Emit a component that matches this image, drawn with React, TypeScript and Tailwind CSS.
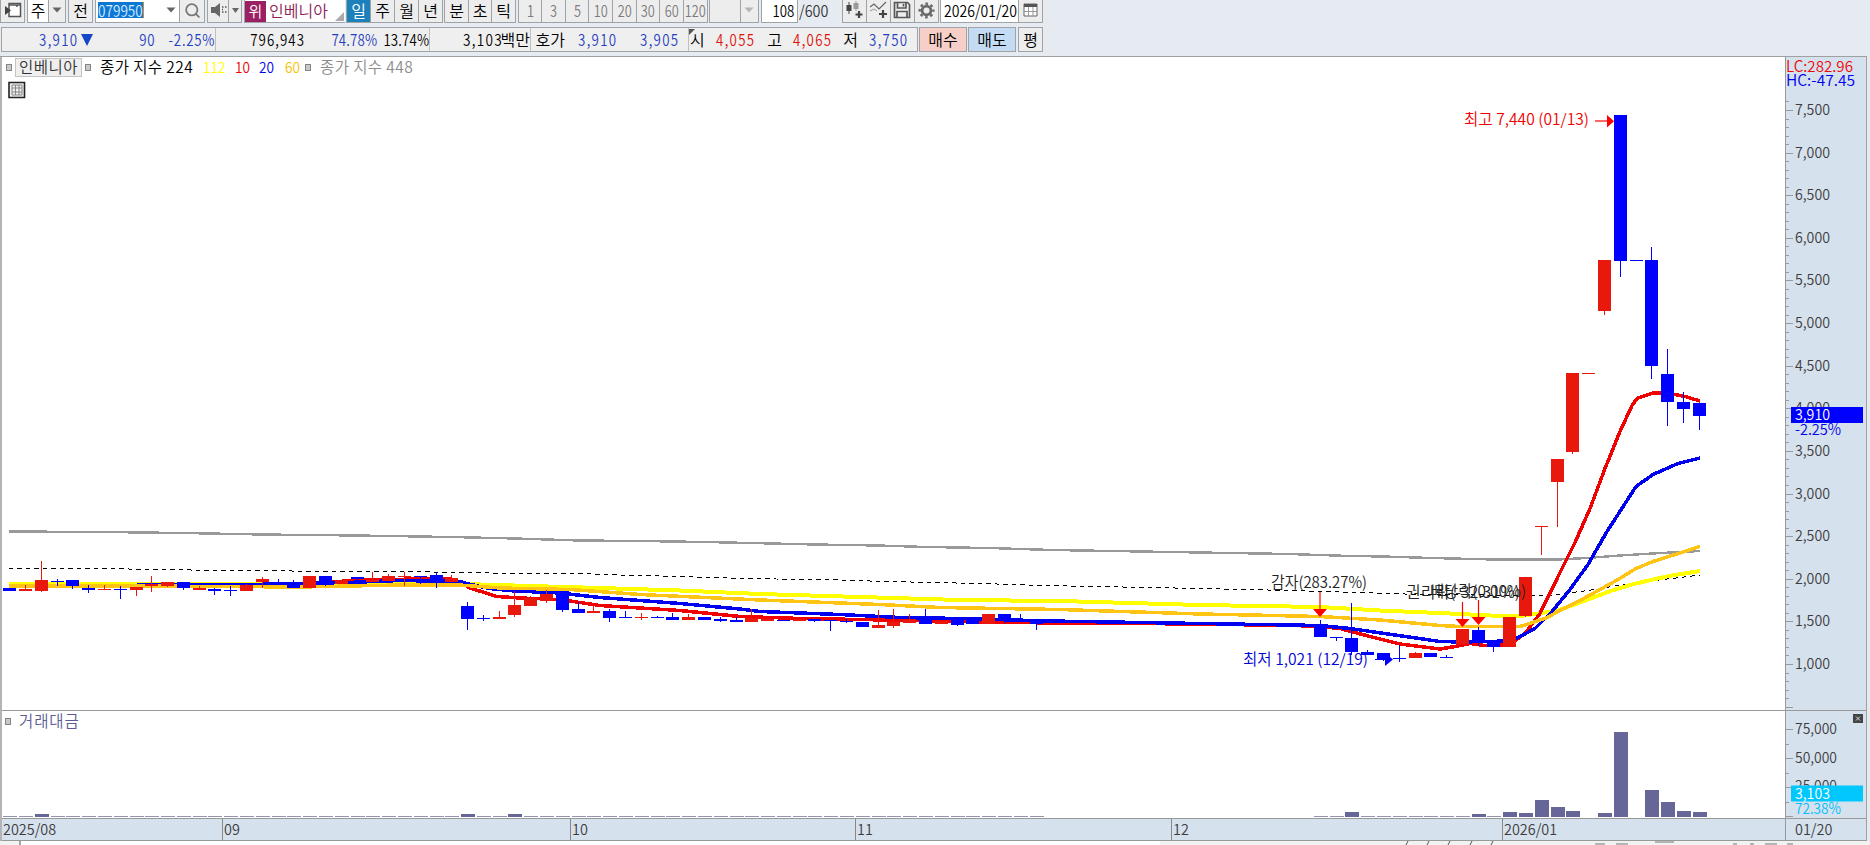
import type { ReactNode } from "react";
import { Search } from "lucide-react";

type Tone = "u" | "d";
// [slot, body top, body bottom, wick top, wick bottom, tone]
type Candle = [number, number, number, number, number, Tone];

const RED = "#e8190c";
const BLUE = "#0000ff";
const FONT = "'Noto Sans CJK KR',sans-serif";

const slotX = (i: number) => Math.round(9.2 + i * 15.79);

const candles: Candle[] = [
  [0, 588, 591.5, 588, 591.5, "d"],
  [1, 589.5, 591, 585, 591, "u"],
  [2, 580.5, 591.5, 561.5, 592.5, "u"],
  [3, 581, 582, 579, 586, "d"],
  [4, 580.5, 586.5, 580.5, 589, "d"],
  [5, 588, 590, 585, 593.5, "d"],
  [6, 589, 590, 585, 590, "u"],
  [7, 589, 590, 586.5, 599, "d"],
  [8, 587, 590, 587, 596.5, "u"],
  [9, 584.5, 586.5, 576.5, 592.5, "u"],
  [10, 582, 586, 582, 587, "u"],
  [11, 582, 588.5, 582, 590, "d"],
  [12, 588.5, 590, 586, 590, "u"],
  [13, 589, 591, 588, 595.5, "d"],
  [14, 590, 591, 586.5, 596.5, "d"],
  [15, 585.5, 591.5, 584.5, 591.5, "u"],
  [16, 579.5, 582.5, 577.5, 588, "u"],
  [17, 582, 584.5, 579.5, 584.5, "d"],
  [18, 585, 588, 580.5, 588, "d"],
  [19, 576.5, 588.5, 576.5, 588.5, "u"],
  [20, 576.5, 584.5, 576.5, 586, "d"],
  [21, 580.5, 584.5, 580.5, 584.5, "u"],
  [22, 577, 579, 577, 582.5, "d"],
  [23, 580.5, 582, 572.5, 582, "u"],
  [24, 576, 581, 574, 581, "u"],
  [25, 576, 577, 572.5, 586, "u"],
  [26, 576, 577, 576, 584.5, "d"],
  [27, 575.5, 582, 572.5, 588, "d"],
  [28, 578.5, 582, 575.5, 582, "u"],
  [29, 606.5, 619, 602.5, 630.5, "d"],
  [30, 618, 619, 615, 621, "d"],
  [31, 617, 619, 611.5, 619, "u"],
  [32, 605.5, 615.5, 591.5, 617, "u"],
  [33, 598, 606.5, 596, 606.5, "u"],
  [34, 594, 601, 590.5, 603, "u"],
  [35, 591.5, 610, 591.5, 612.5, "d"],
  [36, 609.5, 613.5, 602.5, 613.5, "d"],
  [37, 611.5, 613.5, 606.5, 613.5, "u"],
  [38, 611.5, 618, 609, 622.5, "d"],
  [39, 617, 618.5, 611, 618.5, "d"],
  [40, 617, 618.5, 613.5, 620.5, "u"],
  [41, 617, 618.5, 616, 618.5, "d"],
  [42, 617, 620, 613, 620, "d"],
  [43, 617, 620, 614, 620, "u"],
  [44, 617, 620, 617, 620, "d"],
  [45, 619.5, 621, 617.5, 622.5, "d"],
  [46, 620.5, 622.5, 617, 622.5, "d"],
  [47, 618, 622.5, 609, 622.5, "u"],
  [48, 619.5, 621, 619.5, 621, "u"],
  [49, 620, 621.5, 620, 621.5, "d"],
  [50, 619.5, 621, 619.5, 621, "u"],
  [51, 619.5, 621, 619.5, 622.5, "d"],
  [52, 620, 621, 620, 631.5, "d"],
  [53, 621.5, 622.5, 619.5, 623.5, "d"],
  [54, 622, 627.5, 622, 627.5, "d"],
  [55, 625.5, 628.5, 610.5, 628.5, "u"],
  [56, 622, 626.5, 609.5, 628, "u"],
  [57, 620.5, 623.5, 614, 623.5, "u"],
  [58, 618.5, 624.5, 609, 624.5, "d"],
  [59, 621.5, 624, 621.5, 624, "u"],
  [60, 619, 625.5, 619, 626.5, "d"],
  [61, 620, 624.5, 620, 624.5, "d"],
  [62, 614.5, 624.5, 614.5, 624.5, "u"],
  [63, 614.5, 621, 614.5, 623.5, "d"],
  [64, 620, 622.5, 614, 622.5, "d"],
  [65, 621, 624.5, 621, 630, "d"],
  [83, 625, 637.5, 620, 637.5, "d"],
  [84, 637, 638, 637, 641, "d"],
  [85, 638.5, 652.5, 603.5, 655, "d"],
  [86, 652.5, 655.5, 650, 655.5, "d"],
  [87, 653.5, 659.5, 653.5, 661, "d"],
  [88, 658, 659, 645, 662.5, "d"],
  [89, 653, 658.5, 652, 658.5, "u"],
  [90, 653.5, 657.5, 653.5, 657.5, "d"],
  [91, 657, 658, 655, 658, "d"],
  [92, 629.5, 644.5, 629.5, 644.5, "u"],
  [93, 630.5, 643.5, 627, 646.5, "d"],
  [94, 640, 647.5, 640, 652.5, "d"],
  [95, 617, 647.5, 617, 647.5, "u"],
  [96, 577, 616.5, 577, 617.5, "u"],
  [97, 526, 527, 526, 555, "u"],
  [98, 459.5, 482.5, 459.5, 527.5, "u"],
  [99, 373.5, 452.5, 373.5, 454.5, "u"],
  [100, 373, 374, 373, 374, "u"],
  [101, 260.5, 311.5, 260.5, 315, "u"],
  [102, 115.5, 261.5, 115.5, 277.5, "d"],
  [103, 260, 261, 260, 261, "d"],
  [104, 260.5, 366.5, 247, 379, "d"],
  [105, 374.5, 402.5, 349.5, 426.5, "d"],
  [106, 402, 409, 392, 423.5, "d"],
  [107, 403, 416.5, 403, 430.5, "d"],
];

const averages = [
  {
    color: "#999999",
    width: 2.4,
    points:
      "9,532 103,532.5 183,533.5 262,535 357,536 451,537.5 515,539 579,541 640,541.5 705,542.5 751,543.5 815,545 878,546 926,547.5 989,548.5 1052,550.5 1200,553 1289,554.5 1350,556.5 1384,557 1431,558.5 1494,560 1558,560 1587,558.5 1620,556 1652,554 1700,551.5",
  },
  {
    color: "#000000",
    width: 1,
    dash: "4.5 4",
    points:
      "9,568.5 97,569 222,571 430,572.5 490,573.5 570,573.5 617,575.5 681,577 728,578.5 776,579.5 838,580.5 886,582 934,583 997,584.5 1045,586 1200,589 1290,591 1340,592.5 1376,593.5 1420,595 1550,596 1595,590 1612,587 1634,583.5 1680,578 1700,575.5",
  },
  {
    color: "#ffff00",
    width: 4,
    points:
      "9,584 465,584.5 530,586.5 600,588.5 680,591 760,594.5 860,597.5 960,600.5 1060,601.5 1200,605.5 1260,606.5 1320,607.5 1380,611 1450,614 1490,616 1520,616.5 1545,613 1558,611 1580,603 1612,591 1632,585 1653,580 1672,576 1700,571.5",
  },
  {
    color: "#f00000",
    width: 3.5,
    points:
      "9,586 250,587 330,583 360,580 450,579.5 462,584 470,588.5 497,597 520,598.5 560,600 600,606 680,611 740,617 800,619 860,620 960,622 1050,623.5 1200,624.5 1315,626.5 1340,629 1370,637 1400,644.5 1440,649.5 1455,647 1470,644 1485,646 1510,645 1525,634 1540,614 1560,573 1575,543 1590,509 1605,469 1620,432 1632,406 1637,399 1653,393.5 1670,394 1685,397 1700,401.5",
  },
  {
    color: "#0000f0",
    width: 3.5,
    points:
      "9,586 100,586 250,585 347,583 400,581 460,582 466,584 490,589 515,591.5 560,593.5 600,598 680,604 740,609.5 760,612 840,615 900,618 960,619 1050,621.5 1200,624 1320,626 1350,629 1440,642 1460,642.5 1510,641.5 1520,637 1535,629 1552,612 1570,590 1588,565 1607,532 1636,487 1653,475 1678,464 1700,458.5",
  },
  {
    color: "#ffc414",
    width: 3.5,
    points:
      "9,586.5 150,586.5 300,587.5 400,585.5 460,585.5 500,588.5 570,590 640,595 760,600.5 880,605 940,608 1060,610 1200,614.5 1250,615.5 1320,617 1380,620.5 1440,626 1460,627 1520,627 1533,623 1547,618 1560,611 1580,601 1600,590 1618,580 1636,569 1653,562 1672,556 1700,547",
  },
];

const volumeTops: Record<number, number> = {
  2: 814, 29: 814, 32: 814, 85: 812, 93: 814, 95: 812, 96: 813, 97: 800,
  98: 807, 99: 810.5, 101: 813, 102: 732, 104: 789.5, 105: 801.5, 106: 810.5,
  107: 812,
};

const months = [
  { label: "2025/08", w: "w-[220px]" },
  { label: "09", w: "w-[348px]" },
  { label: "10", w: "w-[285px]" },
  { label: "11", w: "w-[316px]" },
  { label: "12", w: "w-[331px]" },
  { label: "2026/01", w: "w-[283px]" },
];

const Label = ({
  x, y, len, fill = "#3c3c3c", size = 15.5, children,
}: { x: number; y: number; len: number; fill?: string; size?: number; children: string }) => (
  <text x={x} y={y - 0.5} fontSize={size} fill={fill} textLength={len} lengthAdjust="spacingAndGlyphs">
    {children}
  </text>
);

const Btn = ({ className = "", children }: { className?: string; children?: ReactNode }) => (
  <div
    className={`flex h-full shrink-0 items-center justify-center border-r border-b border-[#a0a3a6] bg-[#ededed] pb-[2px] ${className}`}
  >
    {children}
  </div>
);

const Caret = ({ color = "#666666" }: { color?: string }) => (
  <svg width="10" height="6" viewBox="0 0 10 6">
    <path d="M0.5 0.5h9L5 5.5z" fill={color} />
  </svg>
);

const Toolbar = () => (
  <div className="flex h-[23px] text-[16px] leading-none text-black">
    <Btn className="w-[25px] border-l">
      <svg width="18" height="18" viewBox="0 0 18 18">
        <path d="M5 2.5h11.500v13H5z" fill="#fff" stroke="#555" strokeWidth="1.500" />
        <path d="M5 4h11.500M13 4v2" stroke="#555" strokeWidth="1.500" />
        <path d="M1 5v9l6-4.500z" fill="#444" />
      </svg>
    </Btn>
    <Btn className="ml-[2px] w-[22px] border-l bg-white!">주</Btn>
    <Btn className="w-[17px]"><Caret /></Btn>
    <Btn className="ml-[2px] w-[25px] border-l">전</Btn>
    <div className="ml-[2px] flex h-full w-[67px] items-center border-b border-l border-[#a0a3a6] bg-white pb-[2px] pl-[2px]">
      <span className="flex h-[16px] w-[54px] shrink-0 origin-left scale-x-85 items-center border-r border-orange-400 bg-[#0c78d4] text-[#d8ecff]">
        079950
      </span>
    </div>
    <Btn className="w-[18px] bg-white!"><Caret /></Btn>
    <Btn className="w-[25px]"><Search size={17} color="#777777" strokeWidth={2.500} /></Btn>
    <Btn className="ml-[2px] w-[22px] border-l">
      <svg width="17" height="16" viewBox="0 0 17 16">
        <path d="M1 5h4l5-4v14l-5-4H1z" fill="#666" />
        <path d="M12 5h1.500M12 10h1.500M15 5h1.500M15 10h1.500M12 7.500h1" stroke="#555" strokeWidth="1.500" />
      </svg>
    </Btn>
    <Btn className="w-[13px]">
      <svg width="7" height="5" viewBox="0 0 7 5"><path d="M0 0h7L3.500 5z" fill="#666" /></svg>
    </Btn>
    <div className="ml-[2px] flex h-full w-[101px] items-center border-b border-l border-[#a0a3a6] bg-white">
      <span className="flex h-[21px] w-[21px] shrink-0 items-center justify-center bg-[#9b2063] pb-[2px] text-[15px] text-white">위</span>
      <span className="ml-[3px] shrink-0 pb-[2px] text-[#8c1f5c]">인베니아</span>
      <svg className="ml-auto self-end" width="11" height="11" viewBox="0 0 11 11"><path d="M10 1v9H1z" fill="#aaa" /></svg>
    </div>
    <Btn className="ml-[1px] w-[25px] border-l bg-[#1c80bb]! text-white">일</Btn>
    <Btn className="w-[24px]">주</Btn>
    <Btn className="w-[24px]">월</Btn>
    <Btn className="w-[24px]">년</Btn>
    <Btn className="ml-[1px] w-[25px] border-l">분</Btn>
    <Btn className="w-[23px]">초</Btn>
    <Btn className="w-[24px]">틱</Btn>
    <div className="ml-[2px] flex text-[#7c7c7c]">
      <Btn className="w-[24px] border-l"><span className="scale-x-85">1</span></Btn>
      {["3", "5", "10", "20", "30", "60", "120"].map((n) => (
        <Btn key={n} className="w-[23.7px]"><span className="scale-x-80">{n}</span></Btn>
      ))}
    </div>
    <Btn className="ml-[1px] w-[32px] border-l" />
    <Btn className="w-[18px]"><Caret color="#b5b5b5" /></Btn>
    <div className="ml-[2px] flex h-full w-[37px] items-center justify-end border-r border-b border-l border-[#a0a3a6] bg-white pr-[2px] pb-[2px]">
      <span className="origin-right scale-x-83">108</span>
    </div>
    <div className="flex w-[44px] items-center pb-[3px] pl-[1px] text-[#333]">
      <span className="origin-left scale-x-90">/600</span>
    </div>
    <Btn className="w-[25px] border-l">
      <svg width="19" height="18" viewBox="0 0 19 18">
        <path d="M4 1v12" stroke="#444" />
        <path d="M1.500 4h5v6h-5z" fill="#444" />
        <path d="M11 0v10" stroke="#999" />
        <path d="M8.500 2h5v6h-5z" fill="#999" />
        <path d="M14 10v7M10.500 13.500h7" stroke="#444" strokeWidth="2.200" />
      </svg>
    </Btn>
    <Btn className="w-[24px]">
      <svg width="19" height="18" viewBox="0 0 19 18">
        <path d="M1 6l4-3 5 5 7-7" fill="none" stroke="#666" strokeWidth="1.200" />
        <path d="M1 10l4-2 3 2" fill="none" stroke="#999" />
        <path d="M14 9v8M10 13h8" stroke="#444" strokeWidth="2.200" />
      </svg>
    </Btn>
    <Btn className="w-[24px]">
      <svg width="18" height="18" viewBox="0 0 18 18" fill="none" stroke="#585858" strokeWidth="1.700">
        <path d="M1.500 1.500h13l2 2v13h-15z" />
        <path d="M4.500 1.500v5.500h8.500V1.500M4 16.500v-6h10v6M10.500 3v2.500" />
      </svg>
    </Btn>
    <Btn className="w-[24px]">
      <svg width="17" height="17" viewBox="0 0 17 17" fill="none" stroke="#6a6a6a">
        <circle cx="8.500" cy="8.500" r="4.400" strokeWidth="2.800" />
        <circle cx="8.500" cy="8.500" r="6.800" strokeWidth="2.400" strokeDasharray="2.670 2.670" strokeDashoffset="1.330" />
      </svg>
    </Btn>
    <div className="ml-[1px] flex h-full w-[78px] items-center border-b border-l border-[#a0a3a6] bg-white pb-[2px] pl-[3px]">
      <span className="origin-left scale-x-[0.88]">2026/01/20</span>
    </div>
    <Btn className="w-[25px] border-l">
      <svg width="15" height="14" viewBox="0 0 15 14">
        <path d="M1 1h13v12H1z" fill="#fff" stroke="#666" />
        <path d="M1 1h13v3H1z" fill="#555" />
        <path d="M1 8.500h13M5.500 4v9M10 4v9" stroke="#999" />
      </svg>
    </Btn>
  </div>
);

const Num = ({ className = "", text = "", children }: { className?: string; text?: string; children: ReactNode }) => (
  <span className={`flex h-full shrink-0 items-center justify-end pb-[2px] whitespace-nowrap ${className}`}>
    <span className={`origin-right scale-x-[0.83] tracking-[1.6px] ${text}`}>{children}</span>
  </span>
);

const Kor = ({ className, children }: { className: string; children: ReactNode }) => (
  <span className={`flex h-full shrink-0 items-center justify-end pb-[2px] whitespace-nowrap text-black ${className}`}>
    {children}
  </span>
);

const QuoteBar = () => (
  <div className="mt-[4px] flex h-[25px] text-[16px] leading-none">
    <div className="ml-[1px] flex w-[917px] border border-[#a0a3a6] bg-[#efefef] text-[#1f40c0]">
      <Num className="w-[76px]">3,910</Num>
      <span className="ml-[3px] flex items-center">
        <svg width="12" height="12" viewBox="0 0 12 12"><path d="M0 0h12L6 12z" fill="#1546c8" /></svg>
      </span>
      <Num className="w-[62px]" text="tracking-[0.8px]!">90</Num>
      <Num className="w-[61px] border-r border-[#c0c0c0]" text="tracking-[0.9px]!">-2.25%</Num>
      <Num className="w-[89px] text-black" text="tracking-[1.3px]!">796,943</Num>
      <Num className="w-[72px]" text="tracking-[0.2px]!">74.78%</Num>
      <Num className="w-[53px] border-r border-[#c0c0c0] text-black" text="tracking-[0.2px]!">13.74%</Num>
      <Kor className="w-[101px] border-r border-[#c0c0c0]">
        <span className="-mr-[2px] origin-right scale-x-[0.85] tracking-[1.5px]">3,103</span>백만
      </Kor>
      <Kor className="w-[34px]">호가</Kor>
      <Num className="w-[52px]">3,910</Num>
      <Num className="w-[62px]">3,905</Num>
      <span className="ml-[9px] flex w-[17px] border-l border-[#c0c0c0] text-black">
        <svg className="-mr-[6px] mt-px shrink-0" width="6" height="6" viewBox="0 0 6 6"><path d="M0 0h6L0 6z" fill="#555" /></svg>
        <span className="flex items-center pb-[2px] pl-px">시</span>
      </span>
      <Num className="w-[50px] text-[#e0100c]">4,055</Num>
      <Kor className="w-[27px]">고</Kor>
      <Num className="w-[50px] text-[#e0100c]">4,065</Num>
      <Kor className="w-[26px]">저</Kor>
      <Num className="w-[50px]">3,750</Num>
    </div>
    <div className="ml-[1px] flex w-[48px] items-center justify-center border border-[#a0a3a6] bg-[#f6cfc8] pb-[2px]">매수</div>
    <div className="ml-[1px] flex w-[48px] items-center justify-center border border-[#a0a3a6] bg-[#c3dcf3] pb-[2px]">매도</div>
    <div className="ml-[2px] flex w-[25px] items-center justify-center border border-[#a0a3a6] bg-[#ededed] pb-[2px]">평</div>
  </div>
);

const Square = ({ className = "" }: { className?: string }) => (
  <i className={`h-[7px] w-[6px] shrink-0 border border-[#858585] bg-[#c8c8c8] ${className}`} />
);

const Legend = () => (
  <div className="flex h-[20px] items-center text-[15.5px] leading-none whitespace-nowrap">
    <Square className="ml-[4px]" />
    <span className="ml-[3px] flex h-[19px] w-[67px] shrink-0 items-center justify-center border border-[#c4c4c4] bg-[#efefef] pb-px tracking-[0.5px] text-[#333]">
      인베니아
    </span>
    <Square className="ml-[3px]" />
    <span className="ml-[9px] w-[103px] tracking-[0.4px] text-black">종가 지수 224</span>
    <span className="w-[32px] origin-left scale-x-88 text-[#ffff00]">112</span>
    <span className="w-[24px] origin-left scale-x-88 text-[#f00000]">10</span>
    <span className="w-[26px] origin-left scale-x-88 text-[#0000f0]">20</span>
    <span className="w-[20px] origin-left scale-x-88 text-[#f5c000]">60</span>
    <Square />
    <span className="ml-[9px] tracking-[0.4px] text-[#8c8c8c]">종가 지수 448</span>
  </div>
);

const PriceChart = () => (
  <svg className="block" width="1783" height="610" viewBox="2 100 1783 610" fontFamily={FONT}>
    <g transform="translate(0 -0.5)" shapeRendering="crispEdges">
      {averages.map((a) => (
        <polyline
          key={a.color}
          points={a.points}
          fill="none"
          stroke={a.color}
          strokeWidth={a.width}
          strokeDasharray={a.dash}
          strokeLinejoin="round"
        />
      ))}
    </g>
    <g shapeRendering="crispEdges">
      {candles.map(([i, top, bottom, high, low, tone]) => {
        const fill = tone === "u" ? RED : BLUE;
        return (
          <g key={i} fill={fill}>
            <rect x={slotX(i) - 6} y={top - 0.4} width={13} height={bottom - top} />
            <rect x={slotX(i)} y={high - 0.4} width={1} height={low - high} />
          </g>
        );
      })}
    </g>

    <Label x={1271} y={588} len={96} fill="#222">감자(283.27%)</Label>
    <Label x={1406} y={598} len={114} fill="#222">권리락(-32.31%)</Label>
    <Label x={1430} y={597} len={96} fill="#222">배당락(0.00%)</Label>
    {[
      [1320, 592, 609],
      [1462.5, 602, 619],
      [1478.5, 600, 617],
    ].map(([x, from, to]) => (
      <g key={x}>
        <path d={`M${x} ${from}V${to}`} stroke="#f00" strokeWidth="1.200" />
        <path d={`M${x - 7} ${to}h14l-7 8z`} fill="#f00" />
      </g>
    ))}

    <Label x={1243} y={665} len={125} fill="#0000d8">최저 1,021 (12/19)</Label>
    <path d="M1375 659.500h10" stroke="#00f" />
    <path d="M1385 653v13l8-6.500z" fill="#00f" />
    <Label x={1464} y={125.500} len={125} fill="#f00000">최고 7,440 (01/13)</Label>
    <path d="M1595 121h13" stroke="#f00" strokeWidth="1.200" />
    <path d="M1607 115v12.500l7-6.200z" fill="#f00" />
  </svg>
);

const VolumeChart = () => (
  <svg className="block" width="1783" height="87" viewBox="2 731 1783 87" shapeRendering="crispEdges">
    {candles.map(([i]) => {
      if (i === 100 || i === 103) return null;
      const top = volumeTops[i] ?? 815.5;
      return (
        <rect
          key={i}
          x={slotX(i) - 6}
          y={top}
          width={14}
          height={817 - top}
          fill={volumeTops[i] ? "#666699" : "#9494ac"}
        />
      );
    })}
  </svg>
);

const PriceAxis = () => {
  const majors = Array.from({ length: 14 }, (_, k) => 7500 - k * 500);
  const yOf = (p: number) => 110.5 + (7500 - p) * 0.08523;
  return (
    <svg className="block" width="80" height="653" viewBox="1786 57 80 653" fontFamily={FONT}>
      {Array.from({ length: 72 }, (_, k) => 7600 - k * 100).map((p) => (
        <path key={p} d={`M1786 ${Math.floor(yOf(p)) + 0.5}h${p % 500 === 0 ? 7 : 3}`} stroke="#999" />
      ))}
      {majors.map((p) => (
        <Label key={p} x={1795} y={yOf(p) + 5} len={35}>{p.toLocaleString("en-US")}</Label>
      ))}
      <path d="M1786 707.500h7" stroke="#999" />
      <Label x={1786} y={72} len={67} fill="#f00808">LC:282.96</Label>
      <Label x={1786} y={86.500} len={69} fill="#0000f0">HC:-47.45</Label>
      <rect x="1791" y="407" width="72" height="16" fill="#00f" />
      <Label x={1795} y={420.500} len={35} fill="#fff">3,910</Label>
      <Label x={1795} y={435.500} len={46} fill="#0000f0">-2.25%</Label>
    </svg>
  );
};

const VolumeAxis = () => (
  <svg className="block" width="80" height="107" viewBox="1786 711 80 107" fontFamily={FONT}>
    {[729.5, 758.5, 787.5, 816.5].map((y) => (
      <path key={y} d={`M1786 ${y}h7`} stroke="#999" />
    ))}
    {[744.5, 773.5, 802.5].map((y) => (
      <path key={y} d={`M1786 ${y}h3`} stroke="#999" />
    ))}
    <Label x={1795} y={734.500} len={42}>75,000</Label>
    <Label x={1795} y={763.500} len={42}>50,000</Label>
    <Label x={1795} y={791} len={42}>25,000</Label>
    <rect x="1791" y="785.500" width="72" height="16" fill="#00c8ff" />
    <Label x={1795} y={799.500} len={35} fill="#fff">3,103</Label>
    <Label x={1795} y={814.500} len={46} fill="#00c0f8">72.38%</Label>
    <rect x="1853" y="714" width="10" height="9" fill="#444" />
    <path d="M1856 716.500l4 4M1860 716.500l-4 4" stroke="#ddd" />
  </svg>
);

const App = () => (
  <div className="flex h-[845px] w-[1870px] flex-col overflow-hidden bg-[#e6ebf2] font-['Noto_Sans_CJK_KR',sans-serif] font-[350]">
    <Toolbar />
    <QuoteBar />

    <div className="mt-[4px] flex h-[785px] w-[1867px] border-t border-r border-[#a0a0a0]">
      <div className="flex w-[1785px] flex-col border-l-2 border-[#b4b4b4] bg-white">
        <Legend />
        <div className="h-[23px] pt-[4px] pl-[6px]">
          <svg width="18" height="18" viewBox="0 0 18 18">
            <path d="M1 1.500h15.500v15H1z" fill="#eee" stroke="#222" strokeWidth="1.600" />
            <path d="M4 4h10v10H4zM4 7h10M4 11h10M7.500 4v10M11 4v10" fill="none" stroke="#888" />
          </svg>
        </div>
        <PriceChart />
        <div className="flex h-[21px] items-center border-t border-[#999] text-[15.5px] leading-none text-[#5c5c92]">
          <Square className="ml-[3px]" />
          <span className="ml-[8px] tracking-[0.9px]">거래대금</span>
        </div>
        <VolumeChart />
        <div className="flex h-[23px] border-t border-b border-[#999] bg-[#d6e1ee] text-[15.5px] leading-none text-[#3c3c3c]">
          {months.map((m, k) => (
            <div
              key={m.label}
              className={`flex shrink-0 items-center pb-[2px] pl-[1px] ${m.w} ${k ? "border-l border-[#888]" : ""}`}
            >
              <span className="origin-left scale-x-[0.93]">{m.label}</span>
            </div>
          ))}
        </div>
      </div>
      <div className="w-[81px] border-l border-[#999] bg-[#d6e1ee]">
        <PriceAxis />
        <div className="border-t border-[#999]">
          <VolumeAxis />
        </div>
        <div className="flex h-[23px] items-center border-t border-b border-[#999] pb-[2px] pl-[9px] text-[15.5px] leading-none text-[#3c3c3c]">
          <span className="origin-left scale-x-[0.93]">01/20</span>
        </div>
      </div>
    </div>

    {/* top edge of the next panel */}
    <svg className="block shrink-0" width="1870" height="4" viewBox="0 841 1870 4">
      <path d="M0 841h1870v4H0z" fill="#f2f2f2" />
      <path d="M20 841h1140v4H20z" fill="#fff" />
      <path d="M1406 845l2-4M1427 845l2-4M1448 845l2-4M1470 845l2-4M1491 845l2-4M20 841v4" stroke="#555" />
      <path d="M1595 844h10M1616 844h12M1655 842h19M1765 844h12M1787 844h6M1733 844h4M1750 844h4" stroke="#777" />
    </svg>
  </div>
);

export default App;
